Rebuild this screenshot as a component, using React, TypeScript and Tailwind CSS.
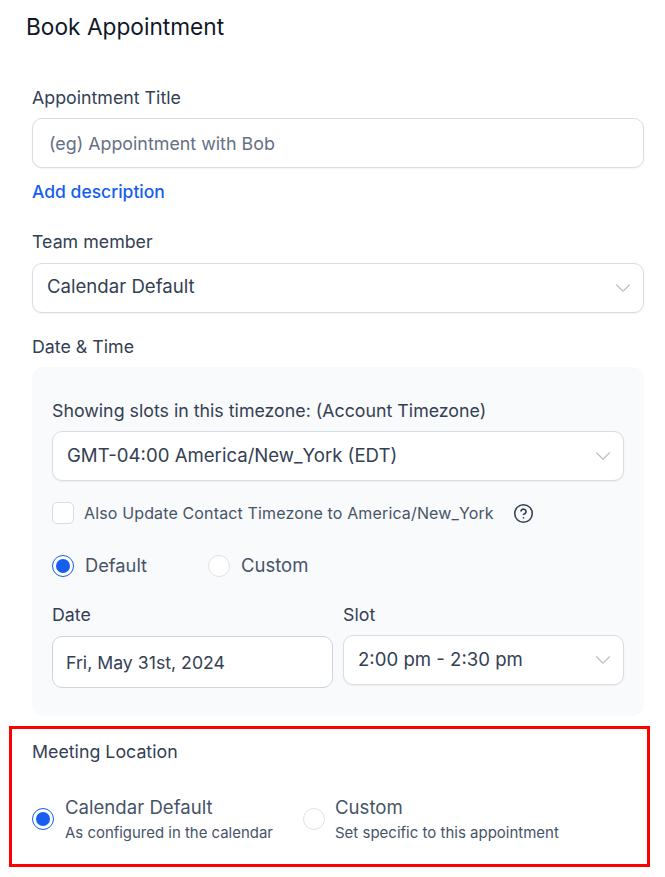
import { ChevronDown, CircleHelp } from "lucide-react";

const Label = ({ children }: { children: string }) => (
  <div className="text-[17.8px] leading-[20px] font-normal text-[#344054]">{children}</div>
);

const Select = ({ value, className, textClass }: { value: string; className: string; textClass?: string }) => (
  <div className={`flex h-[50px] items-center justify-between rounded-[10px] border border-[#d8dce3] bg-white pl-[14px] pr-[7px] shadow-[0_1px_2px_rgba(16,24,40,0.05)] ${className}`}>
    <span className={`text-[18.6px] text-[#344054] ${textClass ?? ""}`}>{value}</span>
    <ChevronDown size={26} strokeWidth={1} className="text-[#b9bfca]" />
  </div>
);

const Radio = ({ checked }: { checked?: boolean }) =>
  checked ? (
    <span className="flex h-[22px] w-[22px] shrink-0 items-center justify-center rounded-full border-[1.5px] border-[#155eef] bg-white">
      <span className="h-[14px] w-[14px] rounded-full bg-[#155eef]" />
    </span>
  ) : (
    <span className="block h-[22px] w-[22px] shrink-0 rounded-full border border-[#dfe2e8] bg-white" />
  );

export default function App() {
  return (
    <div className="h-[877px] w-[665px] overflow-hidden bg-white font-['Inter',sans-serif]">
      <h1 className="pl-[26px] pt-[12px] text-[22.7px] leading-[30px] font-normal text-[#101828]">Book Appointment</h1>

      <div className="mt-[46px] ml-[32px] w-[612px]">
        <Label>Appointment Title</Label>
        <div className="mt-[10px] flex h-[50px] items-center rounded-[10px] border border-[#d8dce3] bg-white pl-[16px] shadow-[0_1px_2px_rgba(16,24,40,0.05)]">
          <span className="pt-[2px] text-[17.85px] text-[#667085]">(eg) Appointment with Bob</span>
        </div>
        <div className="mt-[13px] text-[17.5px] leading-[22px] font-medium text-[#155eef]">Add description</div>

        <div className="mt-[29px]">
          <Label>Team member</Label>
        </div>
        <Select value="Calendar Default" className="mt-[11px]" textClass="pb-[2px]" />

        <div className="mt-[24px]">
          <Label>Date &amp; Time</Label>
        </div>
        <div className="mt-[10px] h-[349px] rounded-[12px] bg-[#f9fafb] px-[20px] pt-[34px]">
          <Label>Showing slots in this timezone: (Account Timezone)</Label>
          <Select value="GMT-04:00 America/New_York (EDT)" className="mt-[10px]" />

          <div className="mt-[20px] flex items-center">
            <span className="h-[22px] w-[22px] rounded-[5px] border border-[#d8dce3] bg-white" />
            <span className="ml-[10px] text-[16px] tracking-[0.14px] text-[#475467]">Also Update Contact Timezone to America/New_York</span>
            <CircleHelp size={21} strokeWidth={1.8} className="ml-[19px] text-[#344054]" />
          </div>

          <div className="mt-[27px] flex items-center">
            <Radio checked />
            <span className="ml-[11px] w-[62px] text-[18.3px] text-[#475467]">Default</span>
            <span className="ml-[61px]">
              <Radio />
            </span>
            <span className="ml-[11px] text-[18.5px] text-[#475467]">Custom</span>
          </div>

          <div className="mt-[25px] flex gap-[10px]">
            <div className="w-[281px]">
              <Label>Date</Label>
              <div className="mt-[11px] flex h-[52px] items-center rounded-[10px] border border-[#cfd4dc] bg-white pl-[13px]">
                <span className="pt-[3px] text-[17.7px] text-[#344054]">Fri, May 31st, 2024</span>
              </div>
            </div>
            <div className="flex-1">
              <Label>Slot</Label>
              <Select value="2:00 pm - 2:30 pm" className="mt-[10px]" />
            </div>
          </div>
        </div>
      </div>

      <div className="mt-[10px] ml-[9px] h-[141px] w-[641px] border-[3px] border-[#ff0000] pl-[20px] pt-[13px]">
        <Label>Meeting Location</Label>
        <div className="mt-[33px] flex">
          <div className="flex w-[271px] items-center">
            <Radio checked />
            <div className="ml-[11px]">
              <div className="text-[18.6px] leading-[24px] text-[#475467]">Calendar Default</div>
              <div className="mt-[5px] text-[14.95px] leading-[18px] text-[#475467]">As configured in the calendar</div>
            </div>
          </div>
          <div className="flex items-center">
            <Radio />
            <div className="ml-[10px]">
              <div className="text-[18.6px] leading-[24px] text-[#475467]">Custom</div>
              <div className="mt-[5px] text-[15px] leading-[18px] text-[#475467]">Set specific to this appointment</div>
            </div>
          </div>
        </div>
      </div>
    </div>
  );
}
